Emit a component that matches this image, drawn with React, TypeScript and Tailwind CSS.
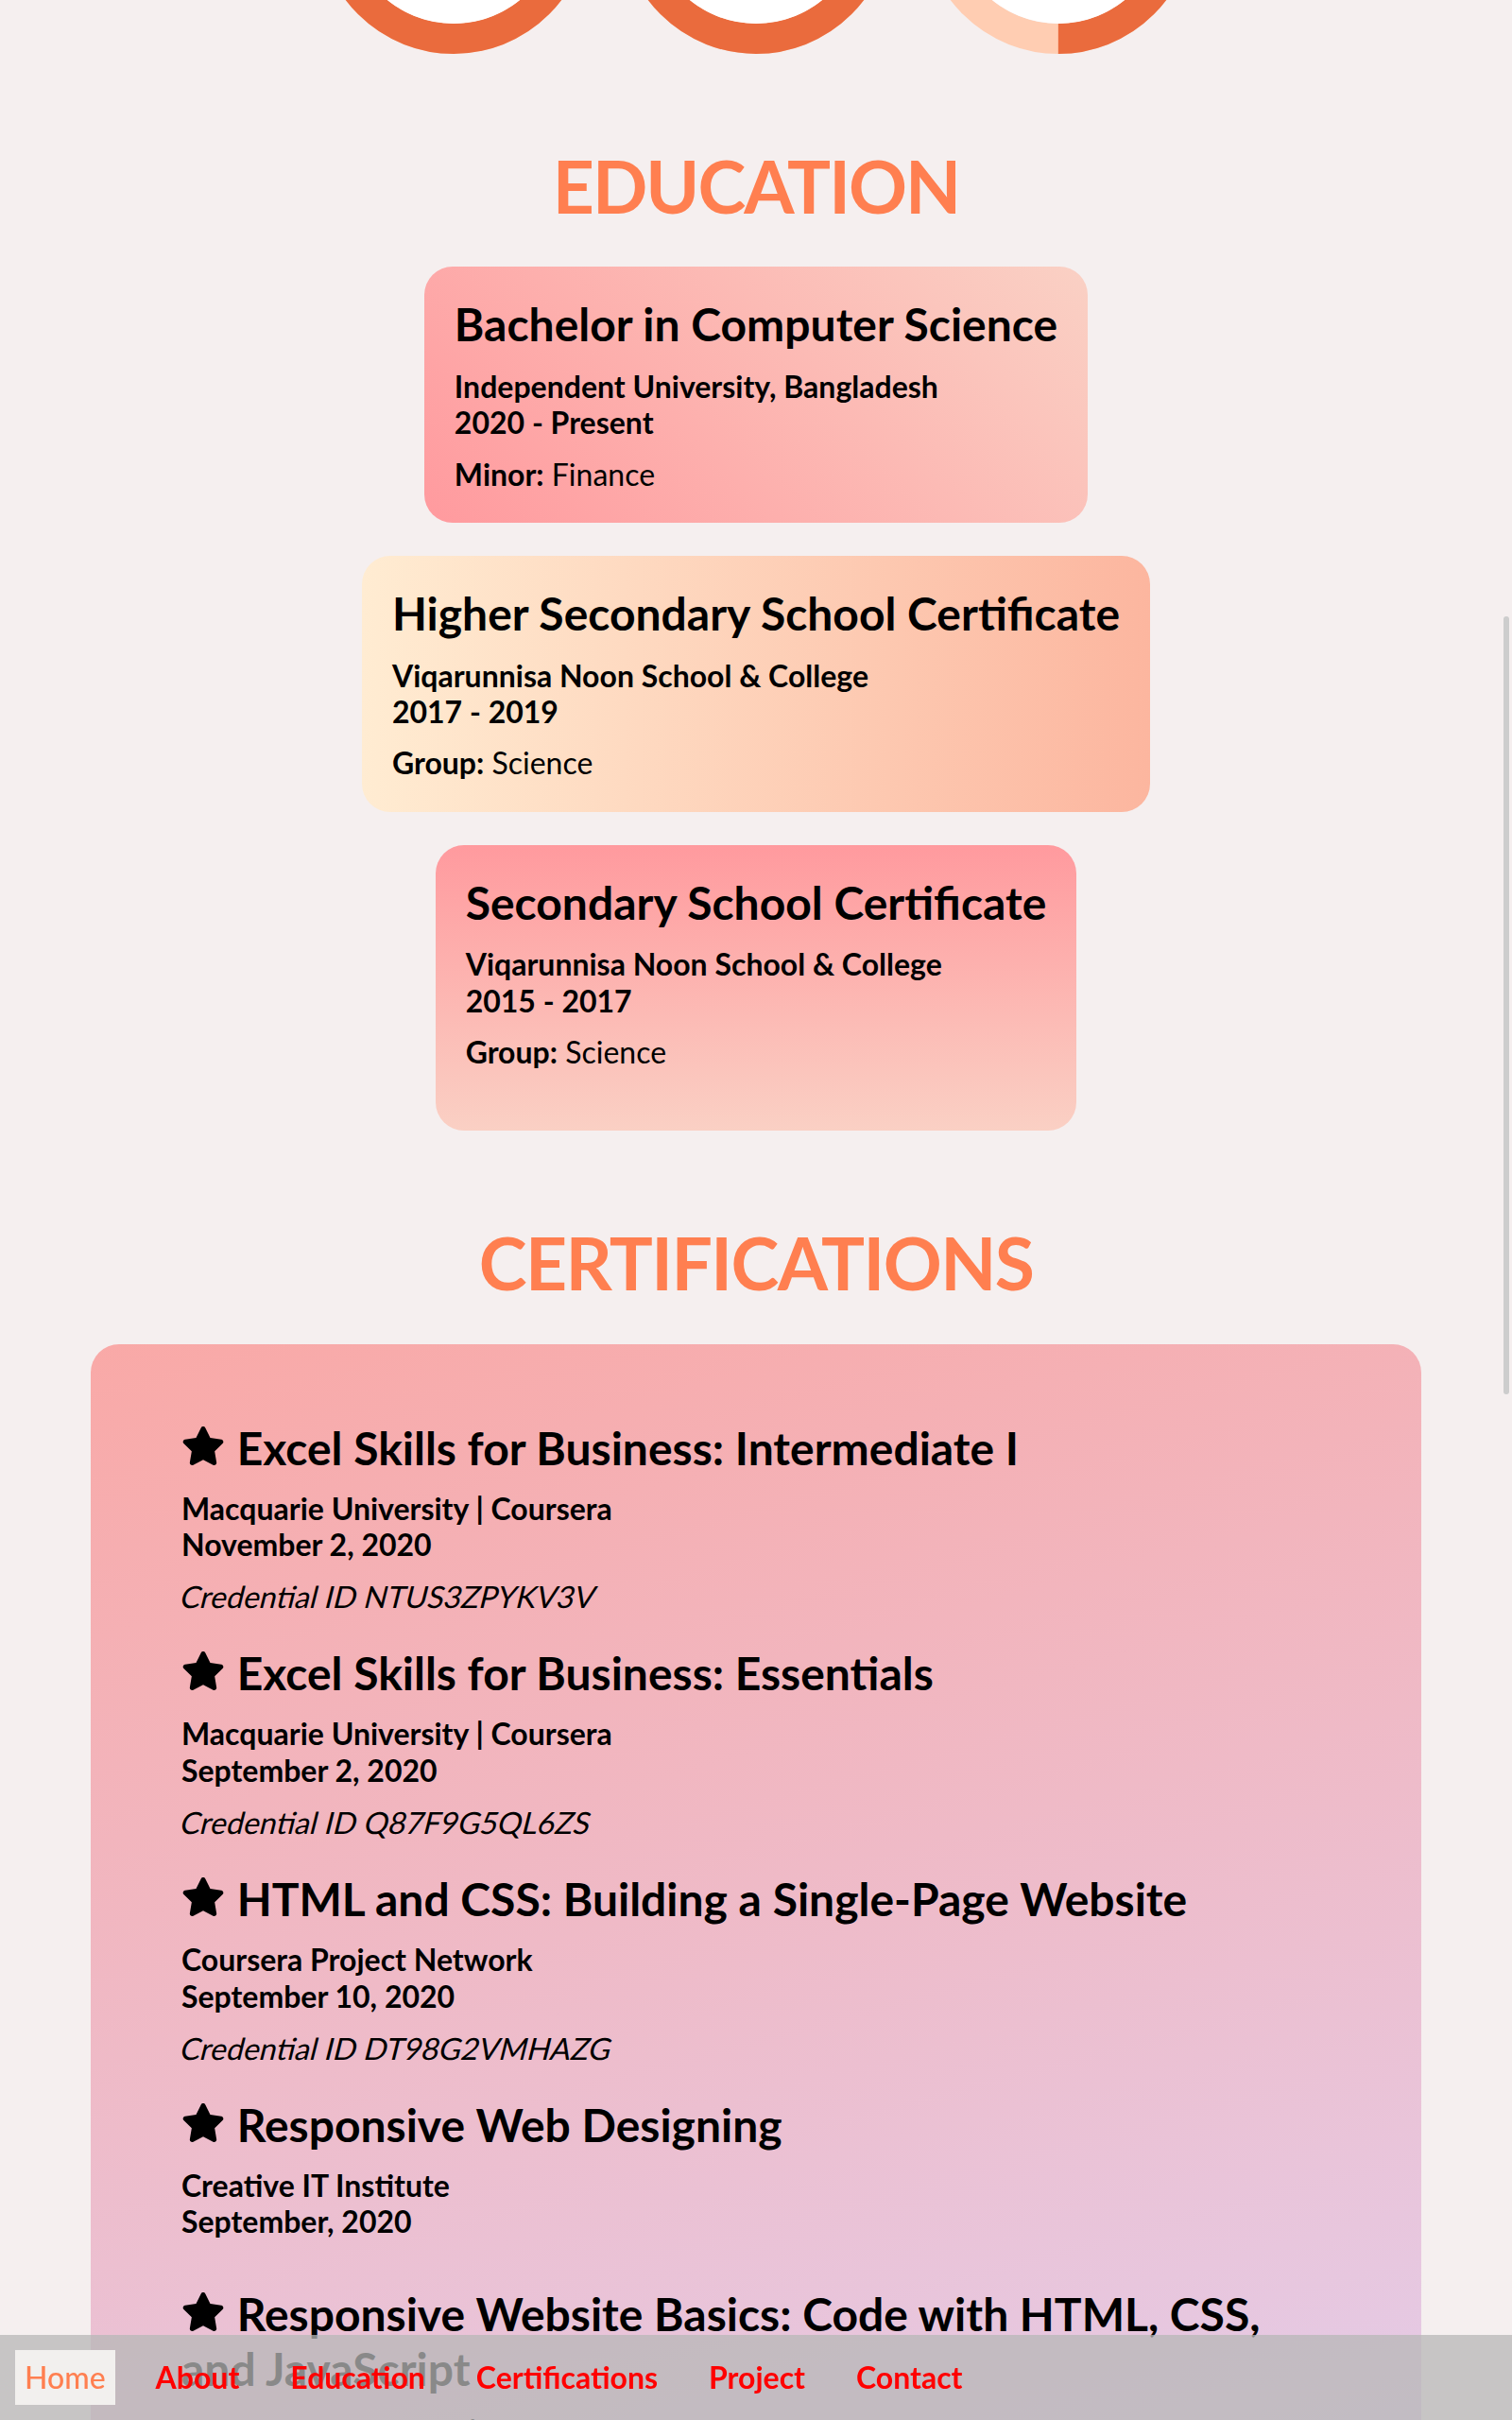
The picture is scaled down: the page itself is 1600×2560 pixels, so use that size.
const Donut = ({ percent }: { percent: number }) => {
  const r = 127;
  const c = 2 * Math.PI * r;
  return (
    <svg width="286" height="286" viewBox="0 0 286 286" className="shrink-0">
      <circle cx="143" cy="143" r={r} fill="none" stroke="#ffcdb2" strokeWidth="32" />
      <circle
        cx="143"
        cy="143"
        r={r}
        fill="none"
        stroke="#ea6b3d"
        strokeWidth="32"
        strokeDasharray={`${(c * percent) / 100} ${c}`}
        transform="rotate(-90 143 143)"
      />
      <circle cx="143" cy="143" r="111" fill="#ffffff" />
    </svg>
  );
};

const Star = () => (
  <svg
    viewBox="0 0 576 512"
    className="mr-[1px] inline-block h-[41px] w-[46px] align-baseline"
    fill="currentColor"
  >
    <path d="M259.3 17.8L194 150.2 47.9 171.5c-26.2 3.8-36.7 36.1-17.7 54.6l105.7 103-25 145.5c-4.5 26.3 23.2 46 46.4 33.7L288 439.6l130.7 68.7c23.2 12.2 50.9-7.4 46.4-33.7l-25-145.5 105.7-103c19-18.5 8.5-50.8-17.7-54.6L382 150.2 316.7 17.8c-11.7-23.6-45.6-23.9-57.4 0z" />
  </svg>
);

type Edu = {
  title: string;
  school: string;
  years: string;
  label: string;
  value: string;
  bg: string;
  pb: string;
};

const education: Edu[] = [
  {
    title: "Bachelor in Computer Science",
    school: "Independent University, Bangladesh",
    years: "2020 - Present",
    label: "Minor:",
    value: "Finance",
    bg: "bg-[linear-gradient(45deg,#ff9a9e_0%,#fad0c4_99%,#fad0c4_100%)]",
    pb: "pb-8",
  },
  {
    title: "Higher Secondary School Certificate",
    school: "Viqarunnisa Noon School & College",
    years: "2017 - 2019",
    label: "Group:",
    value: "Science",
    bg: "bg-[linear-gradient(to_right,#ffecd2_0%,#fcb69f_100%)]",
    pb: "pb-8",
  },
  {
    title: "Secondary School Certificate",
    school: "Viqarunnisa Noon School & College",
    years: "2015 - 2017",
    label: "Group:",
    value: "Science",
    bg: "bg-[linear-gradient(to_bottom,#ff9a9e_0%,#fad0c4_100%)]",
    pb: "pb-16",
  },
];

type Cert = { title: string; org: string; date: string; id?: string };

const certs: Cert[] = [
  {
    title: "Excel Skills for Business: Intermediate I",
    org: "Macquarie University | Coursera",
    date: "November 2, 2020",
    id: "NTUS3ZPYKV3V",
  },
  {
    title: "Excel Skills for Business: Essentials",
    org: "Macquarie University | Coursera",
    date: "September 2, 2020",
    id: "Q87F9G5QL6ZS",
  },
  {
    title: "HTML and CSS: Building a Single-Page Website",
    org: "Coursera Project Network",
    date: "September 10, 2020",
    id: "DT98G2VMHAZG",
  },
  {
    title: "Responsive Web Designing",
    org: "Creative IT Institute",
    date: "September, 2020",
  },
  {
    title: "Responsive Website Basics: Code with HTML, CSS, and JavaScript",
    org: "University of London | Coursera",
    date: "August 28, 2020",
    id: "VXRW7DBJ4MAC",
  },
];

const navItems = ["Home", "About", "Education", "Certifications", "Project", "Contact"];

export default function App() {
  return (
    <div className="relative h-[2560px] overflow-hidden bg-[#f5efef] text-black [font-family:Lato,'Noto_Sans',sans-serif]">
      {/* skill donuts, scrolled mostly out of view */}
      <div className="-mt-[229px] flex justify-center gap-[34px]">
        <Donut percent={90} />
        <Donut percent={85} />
        <Donut percent={50} />
      </div>

      <h1 className="mt-[93px] text-center text-[76.8px] font-bold leading-[1.2] tracking-[-2px] text-[#ff7f50]">
        EDUCATION
      </h1>

      <div className="mt-[40px] flex flex-col items-center gap-[35px]">
        {education.map((e) => (
          <div key={e.title} className={`rounded-[30px] px-8 pt-8 ${e.pb} ${e.bg}`}>
            <h2 className="text-[48px] font-bold leading-[1.2]">{e.title}</h2>
            <p className="mt-[18px] text-[32px] font-bold leading-[1.2]">
              {e.school}
              <br />
              {e.years}
            </p>
            <p className="mt-4 text-[32px] leading-[1.2]">
              <span className="font-bold">{e.label}</span> {e.value}
            </p>
          </div>
        ))}
      </div>

      <h1 className="mt-[93px] text-center text-[76.8px] font-bold leading-[1.2] tracking-[-1.6px] text-[#ff7f50]">
        CERTIFICATIONS
      </h1>

      <div className="mx-[96px] mt-[40px] rounded-[30px] bg-[linear-gradient(165deg,#f9a9a7_0%,#e8c6dd_75%,#e0cfee_100%)] px-[96px] pb-[80px] pt-[81px]">
        {certs.map((c, i) => (
          <div key={c.title} className={i === 0 ? "" : "mt-[33px]"}>
            <h3 className="text-[48px] font-bold leading-[1.2]">
              <Star /> {c.title}
            </h3>
            <p
              className={`${i === certs.length - 1 ? "mt-[19.5px]" : "mt-[16.5px]"} text-[32px] font-bold leading-[1.2]`}
            >
              {c.org}
              <br />
              {c.date}
            </p>
            {c.id ? (
              <p className="mt-[16.5px] text-[32px] leading-[1.2]">
                <span className="inline-block origin-left skew-x-[-14deg]">Credential ID {c.id}</span>
              </p>
            ) : (
              <div className="h-[16.5px]" />
            )}
          </div>
        ))}
      </div>

      {/* overlay scrollbar thumb */}
      <div className="fixed right-[3px] top-[652px] h-[823px] w-[6px] rounded-full bg-[#cdcdcd]" />

      <nav className="fixed bottom-0 left-0 right-0 flex h-[90px] items-center gap-8 bg-[rgba(183,183,183,0.75)] pl-4">
        {navItems.map((n, i) => (
          <a
            key={n}
            href={`#${n.toLowerCase()}`}
            className={
              i === 0
                ? "bg-[#f2f0ee] px-[10px] py-[10px] text-[32px] font-medium leading-[1.2] text-[#ff7f50]"
                : "px-[11px] py-[10px] text-[32px] font-bold leading-[1.2] text-[#ff0000]"
            }
          >
            {n}
          </a>
        ))}
      </nav>
    </div>
  );
}
